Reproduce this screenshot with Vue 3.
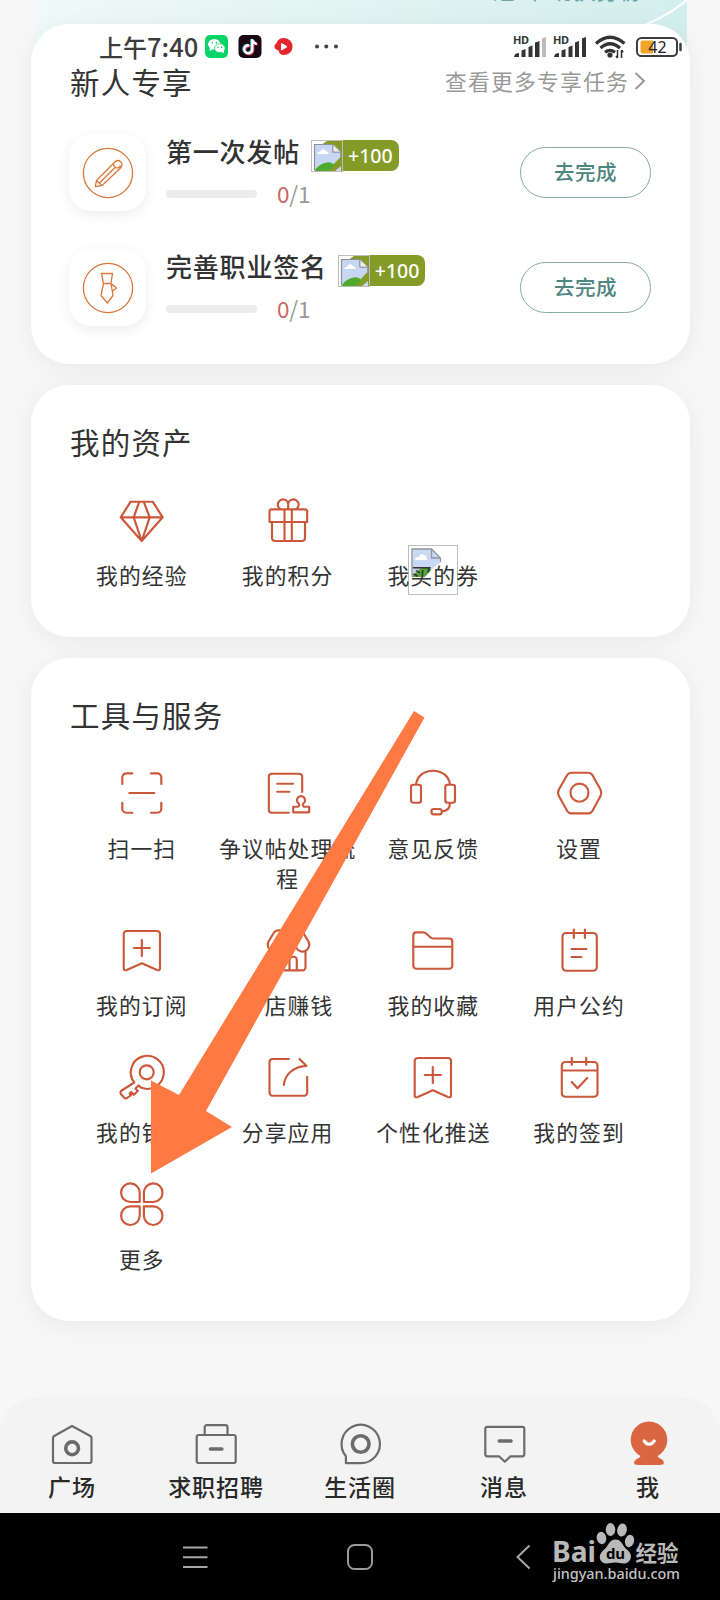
<script setup>
const tasks = [
  { name: '第一次发帖', icon: 'pencil' },
  { name: '完善职业签名', icon: 'tie' },
]

const icons = {
  diamond: 'M13.7 6.7H35.7L45.7 22.3 24.7 46 3.7 22.3ZM3.7 22.3H45.7M22.3 6.7 16.7 22.3 24.7 46 32.7 22.3 26.7 6.7',
  gift: 'M8.5 14.3H42.2a2 2 0 0 1 2 2V27H6.5V16.3a2 2 0 0 1 2-2ZM9 27V43a3 3 0 0 0 3 3H39a3 3 0 0 0 3-3V27M21.5 14.3V46M28.8 14.3V46M25.2 10a5.2 5.2 0 1 0-7.5 4.3M25.2 14V10a5.2 5.2 0 1 1 7.5 4.3',
  scan: 'M5.3 16V9.3a4 4 0 0 1 4-4H15.3M34 5.3H40.3a4 4 0 0 1 4 4V16M44.3 34.7V40.7a4 4 0 0 1-4 4H34M15.3 44.7H9.3a4 4 0 0 1-4-4V34.7M12.3 25H37.3',
  stamp: 'M39.2 24V8.7a3 3 0 0 0-3-3H8.8a3 3 0 0 0-3 3V41.7a3 3 0 0 0 3 3H25.8M14.2 15.7H30.2M14.2 23.7H26.5M30.2 44.3V38.7H35.2C37 37 36.2 36 35.2 35A4 4 0 1 1 40.8 35C39.6 36 39 37 41 38.7H46.2V44.3Z',
  headset: 'M5.2 16.7H10.8a2.2 2.2 0 0 1 2.2 2.2V32.5a2.2 2.2 0 0 1-2.2 2.2H5.2A2.2 2.2 0 0 1 3 32.5V18.9a2.2 2.2 0 0 1 2.2-2.2ZM39.5 16.7H44.8a2.2 2.2 0 0 1 2.2 2.2V32.5a2.2 2.2 0 0 1-2.2 2.2H39.5a2.2 2.2 0 0 1-2.2-2.2V18.9a2.2 2.2 0 0 1 2.2-2.2ZM8 16.7C9 8 16 2.7 25 2.7S41 8 42 16.7M42 34.7C42 40 39.5 43.2 33.7 43.5M25.500 41H31.7a2 2 0 0 1 2 2V44.3a2 2 0 0 1-2 2H25.5a2 2 0 0 1-2-2V43a2 2 0 0 1 2-2Z',
  settings: 'M17 4.7H34.5Q37 4.7 38.4 7L46.5 21.5Q48 25 46.5 28L38.4 43Q37 45.3 34.5 45.3H17Q14.6 45.3 13.2 43L4.9 28Q3.2 25 4.9 21.5L13.2 7Q14.6 4.7 17 4.7ZM34.5 24.7a9 9 0 1 1-18 0a9 9 0 1 1 18 0',
  bookmark: 'M6.7 9a3 3 0 0 1 3-3H40a3 3 0 0 1 3 3V43.3Q43 46 40 45L24.9 38.2 9.7 45Q6.7 46 6.7 43.3ZM24.8 15V31M16.8 23H32.8',
  shop: 'M15 5.3H36Q38.5 5.3 40 7.5L45.5 16.5Q47.5 21 44 24.8Q39 28.5 34.5 24.5Q32 22 32 18.5Q31.5 27 25.5 27T19 18.5Q19 22 16.5 24.5Q12 28.5 7 24.8Q3.5 21 5.5 16.5L11 7.5Q12.5 5.3 15 5.3ZM8.5 26.5V42.3a3 3 0 0 0 3 3H39.5a3 3 0 0 0 3-3V26.5M26.500 45V35Q26.5 31.7 30.2 31.7T33.8 35V45M17.2 45V35',
  folder: 'M5.3 10.3a3 3 0 0 1 3-3H15Q17 7.3 18.5 8.8L22 12Q23.5 13.5 25.5 13.5H41.3a3 3 0 0 1 3 3V40.7a3 3 0 0 1-3 3H8.3a3 3 0 0 1-3-3ZM5.3 21.7H44.3',
  clipboard: 'M12 8H39.3a3.5 3.5 0 0 1 3.5 3.5V42.2a3.5 3.5 0 0 1-3.5 3.5H12a3.5 3.5 0 0 1-3.5-3.5V11.5A3.5 3.5 0 0 1 12 8ZM19.8 4.5V13M30.9 4.5V13M17.5 24H32.5M17.5 32H27.5',
  key: 'M17.3 30.5A16.5 16.5 0 1 1 24 35.6L21.8 33.4 18.5 36.5 20.8 39 16.8 42.8 14 40 12.6 41.4 14.2 43 10 46Q8.5 47 7 45.5L3.8 42Q2.7 40.3 4 39ZM36.7 20.3a7 7 0 1 1-14 0a7 7 0 1 1 14 0',
  share: 'M25.8 7H9.5a3 3 0 0 0-3 3V40.7a3 3 0 0 0 3 3H41.2a3 3 0 0 0 3-3V24.7M20.8 33C22 22 31 14.5 43.5 13.9L36.5 7',
  calendar: 'M11.3 10H40a3.5 3.5 0 0 1 3.5 3.5V41.2a3.5 3.5 0 0 1-3.5 3.5H11.3a3.5 3.5 0 0 1-3.5-3.5V13.5A3.5 3.5 0 0 1 11.3 10ZM7.8 18.5H43.5M17.8 5.8V12.8M32.2 5.8V12.8M17.8 30 23.5 36.3 33.2 26',
  more: 'M22.7 23H13.4A9.3 9.3 0 1 1 22.7 13.8ZM26.9 23V13.8A9.3 9.3 0 1 1 36.2 23ZM22.7 27.4V36.8A9.3 9.3 0 1 1 13.4 27.4ZM26.9 27.4H36.2A9.3 9.3 0 1 1 26.9 36.8Z',
}

const assets = [
  { label: '我的经验', icon: 'diamond' },
  { label: '我的积分', icon: 'gift' },
  { label: '我买的券', icon: null },
]

const tools = [
  { label: '扫一扫', icon: 'scan' },
  { label: '争议帖处理流程', icon: 'stamp' },
  { label: '意见反馈', icon: 'headset' },
  { label: '设置', icon: 'settings' },
  { label: '我的订阅', icon: 'bookmark' },
  { label: '开店赚钱', icon: 'shop' },
  { label: '我的收藏', icon: 'folder' },
  { label: '用户公约', icon: 'clipboard' },
  { label: '我的钥匙', icon: 'key' },
  { label: '分享应用', icon: 'share' },
  { label: '个性化推送', icon: 'bookmark' },
  { label: '我的签到', icon: 'calendar' },
  { label: '更多', icon: 'more' },
]

const tabs = [
  { label: '广场', line: 'M3 15.2Q3 13.8 4.2 13L22 3 40.3 13Q41.5 13.8 41.5 15.2V38a2 2 0 0 1-2 2H5a2 2 0 0 1-2-2Z', bold: 'M28.5 25.3a6.4 6.4 0 1 1-12.8 0a6.4 6.4 0 1 1 12.8 0' },
  { label: '求职招聘', line: 'M4.7 12H39.7a2 2 0 0 1 2 2V38a2 2 0 0 1-2 2H4.7a2 2 0 0 1-2-2V14a2 2 0 0 1 2-2ZM10.7 12V4.2a2 2 0 0 1 2-2H31.5a2 2 0 0 1 2 2V12', bold: 'M16.5 26H27.8' },
  { label: '生活圈', line: 'M22.5 40.2H7.9V33.2A19.2 19.2 0 1 1 22.5 40.2Z', bold: 'M31 21a8.3 8.3 0 1 1-16.6 0a8.3 8.3 0 1 1 16.6 0' },
  { label: '消息', line: 'M5.3 3.8H40.3a2 2 0 0 1 2 2V31.3a2 2 0 0 1-2 2H28.5L22.8 38.7 17 33.3H5.3a2 2 0 0 1-2-2V5.8a2 2 0 0 1 2-2Z', bold: 'M17.3 18H29' },
  { label: '我', active: true },
]
</script>

<template>
  <div class="screen">
    <div class="banner">
      <span class="banner-text">退出&nbsp;&nbsp;切换身份</span>
      <svg class="swoosh" width="220" height="40" viewBox="0 0 220 40"><path d="M164 30Q196 20 220 0" fill="none" stroke="#fff" stroke-width="2" /></svg>
    </div>

    <div class="statusbar">
      <span class="time">上午<b>7:40</b></span>
      <svg class="status-apps" width="140" height="26" viewBox="0 0 140 26">
        <rect x="0" y="1" width="23" height="23" rx="5" fill="#08d567" />
        <ellipse cx="9.3" cy="10.2" rx="6.2" ry="5.2" fill="#fff" /><path d="m5 13-.6 4 4-2Z" fill="#fff" />
        <ellipse cx="14.8" cy="14.2" rx="5.3" ry="4.4" fill="#fff" stroke="#08d567" stroke-width=".7" /><path d="m16 17.5 3 1.8-.5-3Z" fill="#fff" />
        <circle cx="7.3" cy="8.8" r=".8" fill="#08b95a" /><circle cx="11.4" cy="8.8" r=".8" fill="#08b95a" /><circle cx="13" cy="13.2" r=".7" fill="#08b95a" /><circle cx="16.6" cy="13.2" r=".7" fill="#08b95a" />
        <rect x="33.5" y="1" width="23" height="23" rx="5" fill="#1a0716" />
        <g fill="none" stroke-width="2.300"><path d="M44.3 11.5a4 4 0 1 0 3 4V5.5c.6 2.7 2.2 4 4.4 4.3" stroke="#ef3d68" transform="translate(.9 .7)" /><path d="M44.3 11.5a4 4 0 1 0 3 4V5.5c.6 2.7 2.2 4 4.4 4.3" stroke="#5be9e5" transform="translate(-.8 -.5)" /><path d="M44.3 11.5a4 4 0 1 0 3 4V5.5c.6 2.7 2.2 4 4.4 4.3" stroke="#fff" /></g>
        <path d="M79 4a8.4 8.4 0 0 1 8.5 9c-.2 5-4.500 8.200-9 8-3-.2-4.500-1.700-5-4.500-2.500-.8-4.100-2-4-4.500.1-2 2-2.500 2.300-3.500C73 5.400 75.500 4 79 4Z" fill="#e5262d" /><path d="M76.500 9.500 82 12.700 76.500 16Z" fill="#fff" stroke="#fff" stroke-linejoin="round" />
        <g fill="#444"><circle cx="112" cy="12.500" r="2" /><circle cx="121.300" cy="12.500" r="2" /><circle cx="131" cy="12.500" r="2" /></g>
      </svg>
      <div class="status-right">
        <svg width="172" height="26" viewBox="0 0 172 26">
          <g class="hd"><text x="0" y="9.800" textLength="16">HD</text><text x="40" y="9.800" textLength="16">HD</text></g>
          <g fill="#333"><path d="M1 23q.5-4 5-4v4ZM8.500 16.500l4-1.500v8h-4ZM15.500 13l4-1.500V23h-4ZM22 8.500 26.500 7v16H22ZM41 23q.5-4 5-4v4ZM48.500 16.500l4-1.500v8h-4ZM55.500 13l4-1.500V23h-4ZM62 8.500 66 7v16h-4ZM69 4.500 73 3v20h-4Z" /></g>
          <path d="M29 4.500 33 3v20h-4Z" fill="#bbb" />
          <g fill="none" stroke="#333" stroke-width="3.200"><path d="M83 9.500Q97-3 111.500 9.500M87.500 14Q97 5.500 107 14M92 18.300Q97 14.300 102 18.300" /></g>
          <circle cx="97" cy="21" r="2.600" fill="#333" /><path d="M104.500 16V24M108.500 24V16M103 22l1.500 2M108.500 16l1.700 2.200" stroke="#333" stroke-width="1.500" fill="none" />
          <rect x="124" y="4" width="40" height="18" rx="4.500" fill="#fff" stroke="#3c3c3c" stroke-width="2" /><path d="M129.500 6.500H140V19.500h-10.500a2 2 0 0 1-2-2v-9a2 2 0 0 1 2-2Z" fill="#f2a52b" /><path d="M167.500 10v6" stroke="#3c3c3c" stroke-width="2.500" stroke-linecap="round" />
          <text class="battery" x="144.500" y="18.800" text-anchor="middle">42</text>
        </svg>
      </div>
    </div>

    <main class="cards">
      <section class="card tasks">
        <header class="card-head">
          <h2>新人专享</h2>
          <a class="link">查看更多专享任务<svg width="12" height="20" viewBox="0 0 12 20"><path d="m1.500 2 8.500 8-8.500 8" fill="none" stroke="#999" stroke-width="2" /></svg></a>
        </header>
        <div v-for="t in tasks" :key="t.name" class="task">
          <div class="task-icon">
            <svg width="52" height="52" viewBox="0 0 52 52" fill="none" stroke="#d9783a" stroke-width="1.300" stroke-linejoin="round">
              <circle cx="26" cy="26" r="24.600" />
              <path v-if="t.icon === 'pencil'" d="M13.300 39.700 14.500 33.500 32.300 15.500Q35.500 12 38.700 14.800T38 21.500L20 38.500ZM14.500 33.500 20 38.500M38.500 18.500a3.600 3.600 0 1 1-6.500-3M17.500 36 33.500 20" />
              <path v-else d="M19.500 11.500H30.500L29 21.500 31 33.500 25.300 41 19 33.500 21.500 21.500ZM21.500 21.500H29L34.500 26 30.500 29" />
            </svg>
          </div>
          <div class="task-body">
            <div class="task-title">
              <span>{{ t.name }}</span>
              <div class="reward">
                <svg class="broken" width="32" height="32" viewBox="0 0 32 32">
                  <path d="M0 0H18Q11 3 9 8L4 24Q6 30 12 32H0Z" fill="#fff" />
                  <path d="M3.500 4.500H22L29.500 11.500V17L17 30H3.500Z" fill="#c6d6f3" />
                  <path d="M6 14q1-3 3.500-2.500Q11 8 14 10t4 4Z" fill="#fff" />
                  <path d="M4 30Q9 23 16 22.500 20 21.500 23.500 25L17 31H4Z" fill="#4daa2d" />
                  <path d="M3.500 30.500V4.500H22V12H30V18" fill="none" stroke="#8e9098" stroke-width="1.200" />
                  <path d="M22 4.500 30 12H22Z" fill="#eee" stroke="#8e9098" stroke-width=".8" />
                  <path d="M30 26v5h-6Z" fill="#c6d6f3" />
                  <rect x=".5" y=".5" width="31" height="31" fill="none" stroke="#bcbcbc" />
                </svg>
                <span>+100</span>
              </div>
            </div>
            <div class="progress"><i class="track" /><span><b>0</b>/1</span></div>
          </div>
          <button class="go">去完成</button>
        </div>
      </section>

      <section class="card">
        <h2>我的资产</h2>
        <div class="grid">
          <div v-for="a in assets" :key="a.label" class="item">
            <svg v-if="a.icon" class="icon" viewBox="0 0 50 50"><path :d="icons[a.icon]" /></svg>
            <span v-else class="icon-slot">
              <svg class="missing" width="50" height="50" viewBox="0 0 50 50">
                <rect x=".5" y=".5" width="49" height="49" fill="#fff" stroke="#bdbdbd" />
                <path d="M4 4H23.500L32.500 13V17L22 32H4Z" fill="#c9d9f5" /><path d="M7 15q1-4 4-3 1-4 4.500-2.500T19 15Z" fill="#fff" />
                <path d="M4 32Q13 20 20 22.500L25 26 20 32Z" fill="#52a837" />
                <path d="M4 32V4H23.500L32.500 13V17M23.500 4v9h9" fill="none" stroke="#92959b" stroke-width="1.300" />
                <path d="m17 32 8-9 8-6v9l-8 6Z" fill="#fff" />
              </svg>
            </span>
            <span class="label">{{ a.label }}</span>
          </div>
        </div>
      </section>

      <section class="card">
        <h2>工具与服务</h2>
        <div class="grid">
          <div v-for="t in tools" :key="t.label" class="item">
            <svg class="icon" viewBox="0 0 50 50"><path :d="icons[t.icon]" /></svg>
            <span class="label">{{ t.label }}</span>
          </div>
        </div>
      </section>
    </main>

    <nav class="tabbar">
      <div v-for="t in tabs" :key="t.label" class="tab">
        <svg width="44" height="44" viewBox="0 0 44 44" fill="none" stroke-linejoin="round" stroke-linecap="round">
          <template v-if="t.active">
            <path d="M14.500 33A18.300 18.300 0 1 1 31.500 33Q32 34.500 36 36.500 38.500 38.500 37.500 41.300 36.500 42 30 42H16Q9.500 42 8.300 41.300 7.500 38.500 10 36.500 14 34.500 14.500 33Z" fill="#d96541" />
            <path d="M18.200 18Q23 24.500 28.200 18" stroke="#fff" stroke-width="3.200" />
          </template>
          <template v-else>
            <path :d="t.line" stroke="#6b6b6b" stroke-width="2.200" />
            <path :d="t.bold" stroke="#6b6b6b" stroke-width="3.600" />
          </template>
        </svg>
        <span>{{ t.label }}</span>
      </div>
    </nav>

    <footer class="sysnav">
      <svg width="26" height="26" viewBox="0 0 26 26"><path d="M1 3.500H25.500M1 13.200H25.500M1 23H25.500" stroke="#a8a8a8" stroke-width="2" /></svg>
      <svg width="26" height="26" viewBox="0 0 26 26"><rect x="1" y="1" width="24" height="24" rx="6.500" fill="none" stroke="#999" stroke-width="2" /></svg>
      <svg width="26" height="26" viewBox="0 0 26 26"><path d="M18.500 1.500 6.500 13 18.500 24.500" fill="none" stroke="#a8a8a8" stroke-width="2" /></svg>
    </footer>

    <svg class="pointer" width="720" height="1600" viewBox="0 0 720 1600"><path d="M414 711 424.500 717.500 206 1111 232 1127 151 1173.500V1080.500L179 1095Z" fill="#ff7943" /></svg>

    <div class="watermark">
      <svg width="132" height="44" viewBox="0 0 132 44" fill="#b9b9b9">
        <text class="wm-latin" x="-1" y="40" textLength="44" lengthAdjust="spacingAndGlyphs">Bai</text>
        <ellipse cx="48.500" cy="16" rx="4.800" ry="6.200" transform="rotate(-12 48.500 16)" /><ellipse cx="57.500" cy="7.500" rx="4.800" ry="6.500" />
        <ellipse cx="69" cy="8" rx="4.800" ry="6.500" transform="rotate(10 69 8)" /><ellipse cx="76.500" cy="19" rx="4.600" ry="6.200" transform="rotate(14 76.500 19)" />
        <path d="M62.500 17.500C69 17.500 69 24 75 28.500 81 34 77 41.500 71 41.500 67 41.500 66 40.500 62.500 40.500S57 41.500 53.500 41.500C47 41.500 44 34 50 28.500 56 24 56 17.500 62.500 17.500Z" />
        <text class="wm-du" x="62.500" y="37" text-anchor="middle">du</text>
        <text class="wm-cn" x="82.500" y="39">经验</text>
      </svg>
      <span>jingyan.baidu.com</span>
    </div>
  </div>
</template>

<style>
html, body { margin: 0; background: #f7f7f7; }
</style>

<style scoped>
* { box-sizing: border-box; }
.screen { position: relative; width: 720px; height: 1600px; overflow: hidden; display: flex; flex-direction: column; background: #f7f7f7; color: #333; font-family: "Noto Sans CJK SC", "Noto Sans", sans-serif; }
.banner { position: absolute; left: 34px; top: 0; width: 653px; height: 80px; background: linear-gradient(90deg, #eff9f8 0, #e3f4f3 45%, #d3efec 100%); overflow: hidden; }
.banner-text { position: absolute; left: 459px; top: -25px; font-size: 22px; line-height: 28px; letter-spacing: 1px; color: #6fa6a4; white-space: nowrap; }
.swoosh { position: absolute; right: 0; top: 0; }
.cards { flex: 1; padding: 24px 30px 0 31px; display: flex; flex-direction: column; gap: 21px; }
.card { position: relative; padding: 36px 38px 46px; border-radius: 38px; background: #fff; box-shadow: 0 4px 26px rgba(0, 0, 0, .06); }
h2 { margin: 0 0 33px; padding-left: 1px; font-size: 29.500px; line-height: 41px; font-weight: 400; letter-spacing: 1.200px; white-space: nowrap; }
.tasks { height: 340px; padding-top: 36px; padding-bottom: 0; }
.card-head { display: flex; justify-content: space-between; align-items: center; height: 42px; margin-bottom: 32px; }
.card-head h2 { margin: 0; }
.link { display: flex; align-items: center; gap: 5px; padding-right: 6px; color: #999; font-size: 21.800px; letter-spacing: 1.200px; line-height: 32px; }
.task { display: flex; align-items: center; height: 77px; margin-bottom: 38px; }
.task-icon { width: 77px; height: 77px; border-radius: 22px; background: #fff; display: flex; align-items: center; justify-content: center; box-shadow: 0 4px 14px rgba(0, 0, 0, .07); }
.task-body { margin-left: 20px; height: 77px; flex: 1; }
.task-title { display: flex; height: 36px; gap: 11px; font-size: 26px; font-weight: 500; line-height: 36px; letter-spacing: .800px; white-space: nowrap; }
.task-title > span { position: relative; top: -1px; }
.reward { display: flex; align-items: center; height: 31px; margin-top: 6px; padding-right: 6px; border-radius: 8px; color: #fff; font: 500 19.500px/31px "Noto Sans", sans-serif; letter-spacing: 0; background: linear-gradient(90deg, transparent 9px, #859b27 9px); }
.broken { margin-right: 5px; }
.progress { display: flex; align-items: center; height: 30px; margin-top: 9px; gap: 20px; font-size: 22.500px; color: #999; }
.progress span { position: relative; top: -1px; letter-spacing: -.200px; }
.progress b { font-weight: 400; color: #c96863; }
.track { width: 91px; height: 8px; border-radius: 4px; background: #ececec; }
.go { width: 131px; height: 51px; padding: 0 0 3px; margin-right: 1px; border: 1px solid #83aaa5; border-radius: 26px; background: #fff; color: #4d857f; font: 500 20.500px "Noto Sans CJK SC", sans-serif; letter-spacing: .500px; }
.grid { display: grid; grid-template-columns: repeat(4, 1fr); row-gap: 31px; }
.item { display: flex; flex-direction: column; align-items: center; }
.icon { width: 50px; height: 50px; fill: none; stroke: #cb583b; stroke-width: 2.150; stroke-linejoin: round; stroke-linecap: round; }
.icon-slot { position: relative; width: 50px; height: 50px; }
.missing { position: absolute; left: 0; top: 50px; }
.label { position: relative; top: -1px; margin-top: 16px; font-size: 21.800px; line-height: 30px; letter-spacing: 1.100px; text-align: center; }
.tabbar { position: relative; display: grid; grid-template-columns: repeat(5, 1fr); height: 115px; padding-top: 25px; border-radius: 38px 38px 0 0; background: #f3f3f3; box-shadow: 0 0 3px rgba(0, 0, 0, .03); }
.tab { display: flex; flex-direction: column; align-items: center; font-size: 23px; font-weight: 500; line-height: 34px; letter-spacing: .900px; color: #292929; }
.tab svg { overflow: visible; }
.tab span { margin-top: 2px; }
.sysnav { position: relative; height: 87px; background: #000; display: flex; padding: 31px 0 0 182px; gap: 138.500px; }
.statusbar { position: absolute; z-index: 2; left: 99px; right: 35px; top: 33px; height: 28px; display: flex; align-items: center; }
.time { position: relative; top: -1px; font-size: 24px; font-weight: 500; line-height: 28px; width: 106px; white-space: nowrap; color: #3c3c3c; }
.time b { font-size: 25.500px; font-weight: 500; }
.status-right { margin-left: auto; height: 26px; }
.hd { font: 700 11px "Noto Sans", sans-serif; fill: #333; }
.battery { font: 400 16px "Noto Sans", sans-serif; fill: #222; }
.pointer { position: absolute; left: 0; top: 0; pointer-events: none; }
.watermark { position: absolute; left: 553px; top: 1522px; width: 132px; display: flex; flex-direction: column; color: #c4c4c4; font: 500 14.400px/18px "Noto Sans", sans-serif; }
.watermark span { position: relative; top: -1px; }
.wm-latin { font: 700 29px "Noto Sans", sans-serif; }
.wm-du { font: 700 15px "Noto Sans", sans-serif; fill: #000; }
.wm-cn { font: 700 21.500px "Noto Sans CJK SC", sans-serif; }
</style>
